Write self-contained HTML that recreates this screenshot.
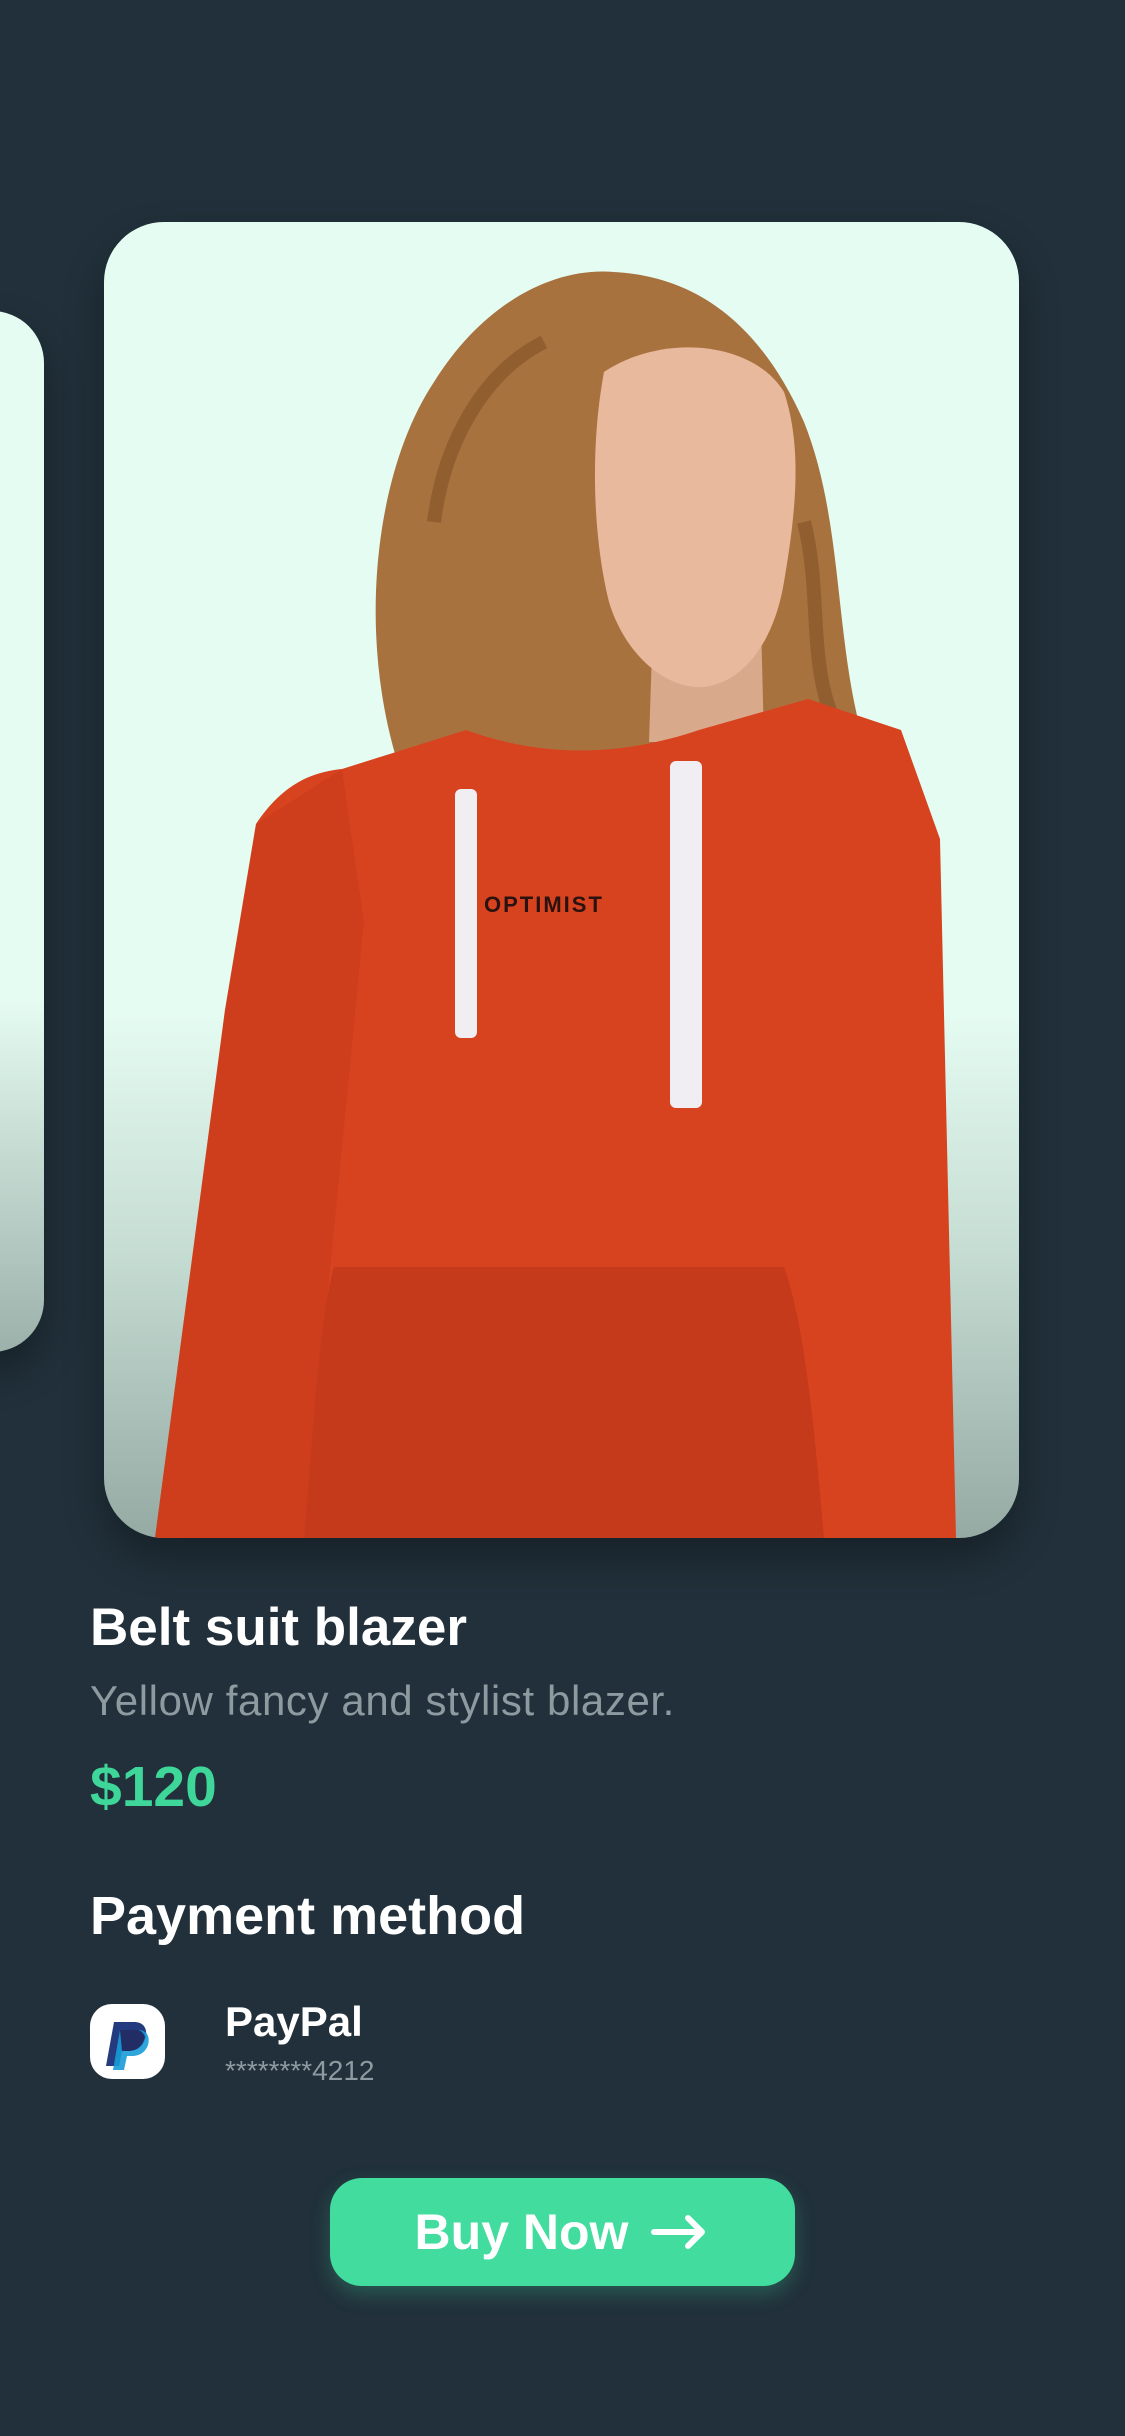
<!DOCTYPE html>
<html><head><meta charset="utf-8"><style>
*{margin:0;padding:0;box-sizing:border-box}
body{width:1125px;height:2436px;background:#21303a;font-family:"Liberation Sans",sans-serif;position:relative;overflow:hidden}
.t{position:absolute;white-space:nowrap}
</style></head><body>
<div style="position:absolute;left:-60px;top:311px;width:104px;height:1041px;border-radius:60px;background:linear-gradient(#e5fcf2 0%,#e5fcf2 66%,#9bb1aa 100%);box-shadow:0 20px 40px rgba(0,0,0,.3)"></div>
<div style="position:absolute;left:104px;top:222px;width:915px;height:1316px;border-radius:60px;overflow:hidden;background:linear-gradient(#e5fcf2 0%,#e5fcf2 60%,#c6ddd4 78%,#94aaa3 100%);box-shadow:0 20px 40px rgba(0,0,0,.3)">
<svg width="915" height="1316" viewBox="0 0 915 1316" style="position:absolute;left:0;top:0">
<path d="M300 560 C250 420 270 250 330 160 C380 80 450 45 510 50 C600 55 660 110 700 200 C740 300 730 420 760 520 C770 560 740 590 700 580 L600 560 L400 600 C340 610 310 590 300 560Z" fill="#a8723f"/>
<path d="M330 300 C340 220 380 150 440 120 M700 300 C720 380 700 450 740 520" stroke="#7a4a22" stroke-width="14" fill="none" opacity=".5"/>
<path d="M549 400 L657 400 L660 520 L545 520Z" fill="#d9a98c"/>
<path d="M500 150 C560 110 650 120 680 170 C700 230 690 300 680 360 C670 420 640 460 600 465 C560 468 520 430 505 380 C490 320 485 230 500 150Z" fill="#e8b99c"/>
<path d="M51 1316 L121 788 L152 602 C180 560 210 550 238 547 L362 508 C450 540 530 530 595 508 L704 477 L797 508 L836 617 L852 1316Z" fill="#d8431f"/>
<path d="M121 788 L152 602 L238 547 L260 700 L200 1316 L51 1316Z" fill="#c83c1c" opacity=".6"/>
<path d="M200 1316 C210 1200 215 1100 230 1045 L680 1045 C700 1100 710 1200 720 1316Z" fill="#c53a1b"/>
<rect x="351" y="567" width="22" height="249" rx="6" fill="#f0eef2"/>
<rect x="566" y="539" width="32" height="347" rx="6" fill="#f0eef2"/>
<text x="380" y="690" font-family="Liberation Sans" font-weight="bold" font-size="22" fill="#2a1210" letter-spacing="2">OPTIMIST</text>
</svg>
</div>
<div class="t" style="left:90px;top:1598px;font-size:53px;line-height:60px;font-weight:bold;color:#fff">Belt suit blazer</div>
<div class="t" style="left:90px;top:1677px;font-size:42px;line-height:48px;letter-spacing:0.6px;color:#8d9ba1">Yellow fancy and stylist blazer.</div>
<div class="t" style="left:90px;top:1755px;font-size:57px;line-height:64px;font-weight:bold;color:#3fd69a">$120</div>
<div class="t" style="left:90px;top:1885px;font-size:54px;line-height:62px;font-weight:bold;color:#fff">Payment method</div>
<div style="position:absolute;left:90px;top:2004px;width:75px;height:75px;border-radius:22px;background:#fff">
<svg width="75" height="75" viewBox="0 0 75 75"><path d="M24 18 L44 18 C56 18 58 28 55 36 C52 44 46 47 38 47 L32 47 L29 62 L16 62Z" fill="#253b80"/><path d="M30 26 L48 26 C58 26 60 34 58 41 C55 49 49 52 42 52 L37 52 L34 66 L23 66Z" fill="#179bd7" opacity=".9"/><path d="M30 26 L48 26 C52 27 54 30 55 33 C53 42 47 47 38 47 L32 47Z" fill="#222d65"/></svg>
</div>
<div class="t" style="left:225px;top:1998px;font-size:42px;line-height:48px;font-weight:bold;color:#fff">PayPal</div>
<div class="t" style="left:225px;top:2056px;font-size:28px;line-height:30px;color:#8d9ba1">********4212</div>
<div style="position:absolute;left:330px;top:2178px;width:465px;height:108px;border-radius:32px;background:#41dc9e;box-shadow:0 8px 20px rgba(65,220,158,.25);display:flex;align-items:center;justify-content:center;color:#fff;font-size:50px;font-weight:bold">Buy Now<svg width="60" height="40" viewBox="0 0 60 40" style="margin-left:22px"><path d="M4 20 L52 20 M38 6 L52 20 L38 34" stroke="#fff" stroke-width="6" fill="none" stroke-linecap="round" stroke-linejoin="round"/></svg></div>
</body></html>
